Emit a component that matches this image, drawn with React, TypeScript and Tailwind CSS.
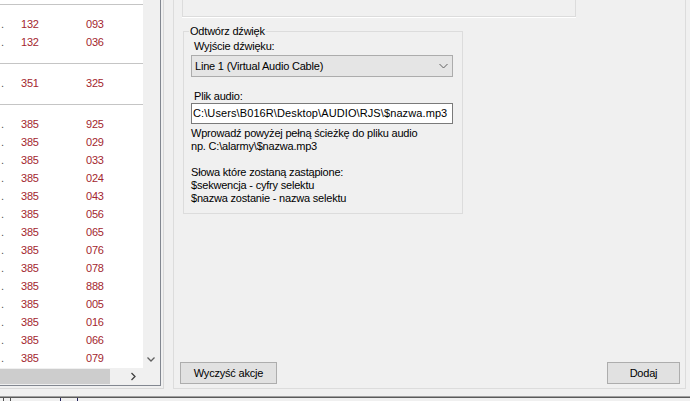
import React from "react";

const groups: string[][][] = [
  [
    ["132", "093"],
    ["132", "036"],
  ],
  [["351", "325"]],
  [
    "925", "029", "033", "024", "043", "056", "065", "076", "078", "888", "005", "016", "066", "079",
  ].map((v) => ["385", v]),
];

function Row({ a, b }: { a: string; b: string }) {
  return (
    <div className="flex h-[18px] items-center text-[#a3262e] leading-[18px]">
      <span className="w-[21px] pl-[1px] text-[#555]">.</span>
      <span className="w-[65px]">{a}</span>
      <span>{b}</span>
    </div>
  );
}

function Button({ label, w }: { label: string; w: string }) {
  return (
    <div
      className={`${w} flex h-[22px] items-center justify-center border border-[#adadad] bg-[#e1e1e1] text-black leading-[13px]`}
    >
      {label}
    </div>
  );
}

export default function App() {
  return (
    <div className="relative flex h-[401px] w-[690px] flex-col overflow-hidden bg-[#f0f0f0] font-['Liberation_Sans',Arial,sans-serif] text-[11px] tracking-[-0.2px] text-black">
      <div className="flex h-[389px] shrink-0">
        {/* Left column with list */}
        <div className="h-[389px] w-[164px] shrink-0 border-b border-r border-[#d9d9d9]">
          <div className="flex h-[386px] w-[161px] flex-col border-b border-r border-[#828790]">
            <div className="flex h-[368px]">
              <div className="h-[368px] w-[143px] overflow-hidden bg-white">
                <div className="h-[4px]" />
                {groups.map((g, gi) => (
                  <div key={gi} className="border-t border-[#c5c5c5] pb-[12px] pt-[10px]">
                    {g.map(([a, b], i) => (
                      <Row key={i} a={a} b={b} />
                    ))}
                  </div>
                ))}
              </div>
              <div className="flex w-[17px] flex-col justify-end bg-[#f0f0f0] pb-[4px]">
                <svg width="17" height="8" viewBox="0 0 17 8">
                  <polyline points="4.5,1.5 8,5 11.5,1.5" fill="none" stroke="#606060" strokeWidth="1.3" />
                </svg>
              </div>
            </div>
            <div className="flex h-[17px]">
              <div className="flex w-[143px] items-center bg-[#f0f0f0]">
                <div className="h-[15px] w-[110px] bg-[#cdcdcd]" />
                <svg className="ml-[19px]" width="10" height="17" viewBox="0 0 10 17">
                  <polyline points="2.5,5 6,8.5 2.5,12" fill="none" stroke="#404040" strokeWidth="1.3" />
                </svg>
              </div>
              <div className="w-[17px] bg-[#f0f0f0]" />
            </div>
          </div>
        </div>

        {/* Right panel */}
        <div className="ml-[9px] flex h-[389px] w-[513px] shrink-0 flex-col border-b border-l border-r border-[#dcdcdc]">
          <div className="ml-[8px] h-[17px] w-[394px] border-b border-l border-r border-[#dcdcdc] shadow-[0_1px_0_#ffffff]" />

          <div className="relative ml-[9px] mt-[14px] h-[183px] w-[280px] border border-[#dcdcdc]">
            <span className="absolute -top-[7px] left-[5px] bg-[#f0f0f0] px-[1px] leading-[13px]">
              Odtwórz dźwięk
            </span>
            <div className="ml-[10px] mt-[8px] leading-[13px]">Wyjście dźwięku:</div>
            <div className="ml-[7px] mt-[2px] flex h-[22px] w-[262px] items-center justify-between border border-[#acacac] bg-[#e5e5e5] pl-[3px] pr-[4px]">
              <span className="leading-[13px]">Line 1 (Virtual Audio Cable)</span>
              <svg width="9" height="6" viewBox="0 0 9 6">
                <polyline points="0.5,1 4.5,5 8.5,1" fill="none" stroke="#606060" strokeWidth="1" />
              </svg>
            </div>
            <div className="ml-[10px] mt-[13px] leading-[13px]">Plik audio:</div>
            <div className="ml-[7px] flex h-[21px] w-[262px] items-center overflow-hidden whitespace-nowrap border border-[#7a7a7a] bg-white pl-[1px] tracking-[0.1px]">
              {"C:\\Users\\B016R\\Desktop\\AUDIO\\RJS\\$nazwa.mp3"}
            </div>
            <div className="ml-[7px] mt-[3px] leading-[13px]">
              <div>Wprowadź powyżej pełną ścieżkę do pliku audio</div>
              <div>{"np. C:\\alarmy\\$nazwa.mp3"}</div>
              <div className="h-[13px]" />
              <div>Słowa które zostaną zastąpione:</div>
              <div>$sekwencja - cyfry selektu</div>
              <div>$nazwa zostanie - nazwa selektu</div>
            </div>
          </div>

          <div className="mt-auto flex items-end justify-between pb-[4px] pl-[6px] pr-[5px]">
            <Button label="Wyczyść akcje" w="w-[97px]" />
            <Button label="Dodaj" w="w-[73px]" />
          </div>
        </div>
      </div>

      <div className="h-[7px] shrink-0" />
      <div className="h-[1px] shrink-0 bg-[#a0a0a0]" />
      <div className="h-[1px] shrink-0 bg-[#5a5a5a]" />
      <div className="flex h-[3px] shrink-0 items-start">
        <div className="ml-[3px] h-[3px] w-[1px] bg-[#505050]" />
        <div className="ml-[6px] h-[3px] w-[1px] bg-[#505050]" />
        <div className="ml-[49px] h-[3px] w-[18px] border-l border-r border-[#20205a]" />
      </div>
    </div>
  );
}
